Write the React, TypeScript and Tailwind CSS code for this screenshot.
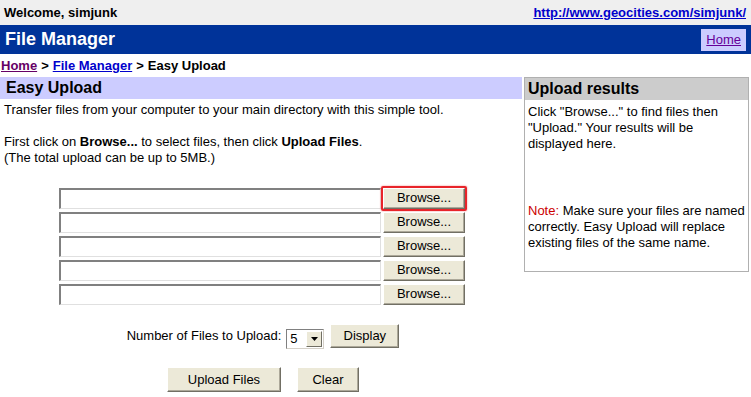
const btn =
  "bg-[#ece9d8] border border-t-white border-l-white border-r-[#716f64] border-b-[#716f64] shadow-[inset_-1px_-1px_0_#aca899] text-[13px] text-black flex items-center justify-center";

function FileRow({ focused }: { focused?: boolean }) {
  return (
    <div className="flex items-center h-[22px] gap-[2px]">
      <div className="w-[322px] h-[21px] bg-white border-t-2 border-l-2 border-t-[#808080] border-l-[#808080] border-b border-r border-b-[#e0e0e0] border-r-[#e0e0e0]" />
      <div className={focused ? "rounded-[2px] border-2 border-[#e8242a] shadow-[0_0_2px_#f08080] -m-[2px]" : ""}>
        <div className={`${btn} w-[82px] h-[21px]`}>Browse...</div>
      </div>
    </div>
  );
}

export default function App() {
  return (
    <div className="w-[751px] h-[397px] overflow-hidden bg-white text-black font-['Liberation_Sans',Arial,sans-serif]">
      <div className="h-[25px] bg-[#efefef] flex items-center justify-between pl-[4px] pr-[5px] text-[13px] font-bold">
        <span>Welcome, simjunk</span>
        <a className="text-[#0000cc] underline">http://www.geocities.com/simjunk/</a>
      </div>
      <div className="h-[29px] bg-[#003399] flex items-center justify-between pl-[5px] pr-[5px]">
        <span className="text-white text-[18px] font-bold">File Manager</span>
        <span className="bg-[#ccccff] h-[22px] px-[5px] flex items-center text-[13px] text-[#660099] underline">Home</span>
      </div>
      <div className="h-[23px] flex items-center pl-[1px] text-[13px] font-bold">
        <a className="text-[#660066] underline">Home</a>
        <span className="mx-[4px]">&gt;</span>
        <a className="text-[#0000cc] underline">File Manager</a>
        <span className="mx-[4px]">&gt;</span>
        <span>Easy Upload</span>
      </div>
      <div className="flex gap-[2px]">
        <div className="w-[522px]">
          <div className="h-[22px] bg-[#ccccff] pl-[6px] flex items-center text-[16px] font-bold">Easy Upload</div>
          <div className="pl-[4px] pt-[3px] text-[13px] leading-[16px]">
            <p>Transfer files from your computer to your main directory with this simple tool.</p>
            <p className="mt-[16px]">
              First click on <b>Browse...</b> to select files, then click <b>Upload Files</b>.
            </p>
            <p>(The total upload can be up to 5MB.)</p>
          </div>
          <div className="flex flex-col items-center pl-[2px] mt-[21px] gap-[2px]">
            <FileRow focused />
            <FileRow />
            <FileRow />
            <FileRow />
            <FileRow />
          </div>
          <div className="flex items-center justify-center pl-[4px] mt-[19px] h-[24px] text-[13px]">
            <span className="mr-[5px]">Number of Files to Upload:</span>
            <div className="w-[38px] h-[20px] bg-white border border-t-[#808080] border-l-[#808080] border-b-[#d4d0c8] border-r-[#d4d0c8] flex items-center justify-between mt-[5px]">
              <span className="pl-[3px] text-[13px] leading-none">5</span>
              <span className="w-[16px] h-[16px] mr-[1px] bg-[#ece9d8] border border-t-white border-l-white border-r-[#716f64] border-b-[#716f64] flex items-center justify-center">
                <svg width="7" height="4" viewBox="0 0 7 4"><path d="M0 0h7L3.5 4z" fill="#000" /></svg>
              </span>
            </div>
            <div className={`${btn} w-[69px] h-[24px] ml-[6px]`}>Display</div>
          </div>
          <div className="flex items-center justify-center pl-[4px] mt-[19px] gap-[16px]">
            <div className={`${btn} w-[114px] h-[25px]`}>Upload Files</div>
            <div className={`${btn} w-[62px] h-[25px]`}>Clear</div>
          </div>
        </div>
        <div className="w-[225px] h-[195px] border border-[#b0b0b0]">
          <div className="h-[22px] bg-[#cccccc] pl-[3px] flex items-center text-[16px] font-bold">Upload results</div>
          <div className="pl-[3px] pr-[2px] pt-[4px] text-[13px] leading-[16px]">
            <p>Click "Browse..." to find files then "Upload." Your results will be displayed here.</p>
            <p className="mt-[51px]">
              <span className="text-[#cc0000]">Note:</span> Make sure your files are named correctly. Easy Upload will replace existing files of the same name.
            </p>
          </div>
        </div>
      </div>
    </div>
  );
}
